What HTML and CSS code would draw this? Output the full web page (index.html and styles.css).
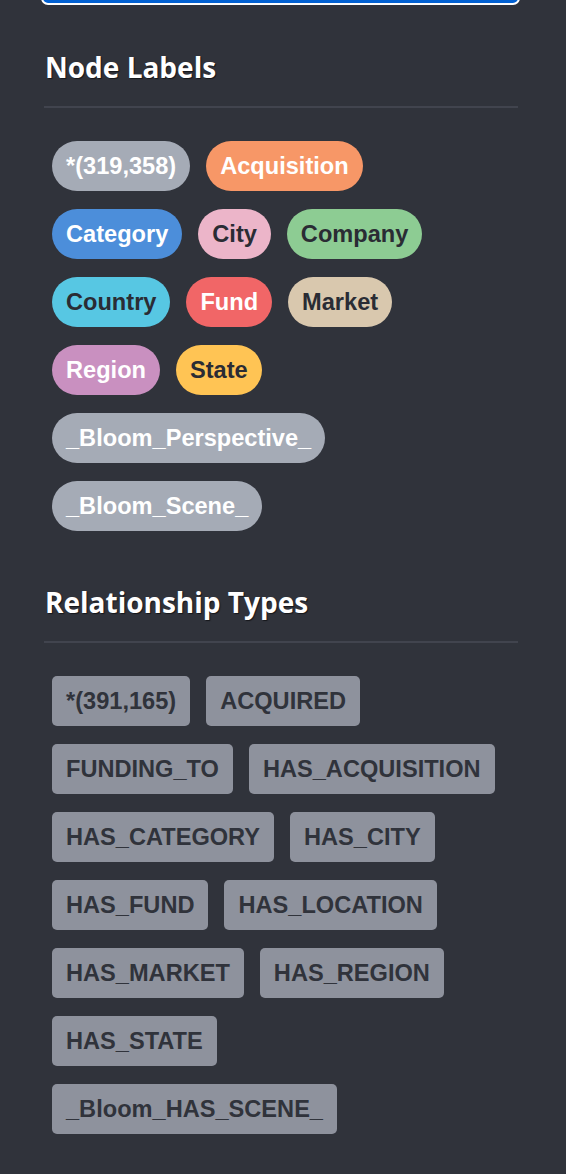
FILE: index.html
```html
<!DOCTYPE html>
<html>
<head>
<meta charset="utf-8">
<link rel="stylesheet" href="styles.css">
</head>
<body>
<div class="panel">
  <div class="search"></div>
  <section class="group">
    <h2 class="title">Node Labels</h2>
    <div class="chips">
      <span class="pill c-all">*(319,358)</span>
      <span class="pill c-acq">Acquisition</span>
      <span class="pill c-cat">Category</span>
      <span class="pill c-city">City</span>
      <span class="pill c-comp">Company</span>
      <span class="pill c-country">Country</span>
      <span class="pill c-fund">Fund</span>
      <span class="pill c-market">Market</span>
      <span class="pill c-region">Region</span>
      <span class="pill c-state">State</span>
      <span class="pill c-all">_Bloom_Perspective_</span>
      <span class="pill c-all">_Bloom_Scene_</span>
    </div>
  </section>
  <section class="group">
    <h2 class="title">Relationship Types</h2>
    <div class="chips">
      <span class="tag">*(391,165)</span>
      <span class="tag">ACQUIRED</span>
      <span class="tag">FUNDING_TO</span>
      <span class="tag">HAS_ACQUISITION</span>
      <span class="tag">HAS_CATEGORY</span>
      <span class="tag">HAS_CITY</span>
      <span class="tag">HAS_FUND</span>
      <span class="tag">HAS_LOCATION</span>
      <span class="tag">HAS_MARKET</span>
      <span class="tag">HAS_REGION</span>
      <span class="tag">HAS_STATE</span>
      <span class="tag">_Bloom_HAS_SCENE_</span>
    </div>
  </section>
</div>
</body>
</html>
```
FILE: styles.css
```css
html, body {
  margin: 0;
  padding: 0;
  background: #30333b;
}
body {
  font-family: "Liberation Sans", Arial, sans-serif;
}
.panel {
  padding: 0 48px 0 44px;
}
.search {
  height: 38px;
  margin: -37px -2px 0 -3px;
  background: #0261d2;
  border: 2px solid #ffffff;
  border-radius: 7px;
}
.group {
  margin-top: 45px;
}
.group + .group {
  margin-top: 54px;
}
.title {
  margin: 0;
  padding: 0 0 22px 1px;
  font-family: "Open Sans", sans-serif;
  font-weight: 700;
  font-size: 28px;
  line-height: 34px;
  color: #ffffff;
  text-shadow: 1px 1px 1px #15161a;
  border-bottom: 2px solid #41444e;
}
.chips {
  display: flex;
  flex-wrap: wrap;
  gap: 18px 16px;
  padding: 33px 12px 0 8px;
}
.pill, .tag {
  display: inline-block;
  height: 50px;
  line-height: 50px;
  padding: 0 14px;
  font-weight: 700;
  font-size: 23.6px;
  white-space: nowrap;
}
.pill {
  border-radius: 25px;
  color: #ffffff;
}
.tag {
  border-radius: 5px;
  background: #8e929d;
  color: #30333b;
}
.c-all { background: #a5abb6; }
.c-acq { background: #f79767; }
.c-cat { background: #4c8eda; }
.c-city { background: #ecb5c9; color: #2a2c34; }
.c-comp { background: #8dcc93; color: #2a2c34; }
.c-country { background: #57c7e3; color: #2a2c34; }
.c-fund { background: #f16667; }
.c-market { background: #d9c8ae; color: #2a2c34; }
.c-region { background: #c990c0; }
.c-state { background: #ffc454; color: #2a2c34; }
```
